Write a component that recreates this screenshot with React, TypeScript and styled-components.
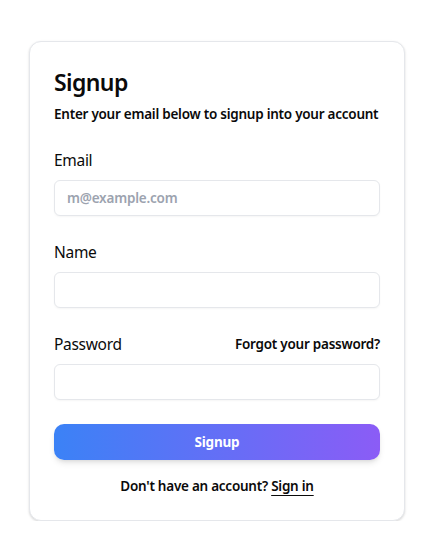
import React from "react";
import styled, { createGlobalStyle } from "styled-components";

const Global = createGlobalStyle`
  * { box-sizing: border-box; }
  body {
    margin: 0;
    background: #ffffff;
    font-family: "Noto Sans", "Open Sans", sans-serif;
    color: #0a0a0a;
  }
`;

const Page = styled.div`
  padding: 41px 0 0 29px;
`;

const Card = styled.div`
  width: 376px;
  border: 1px solid #e5e7eb;
  border-radius: 12px;
  background: #fff;
  box-shadow: 0 1px 3px rgba(0, 0, 0, 0.1), 0 1px 2px rgba(0, 0, 0, 0.06);
  padding: 24px;
  display: flex;
  flex-direction: column;
`;

const Title = styled.h1`
  margin: 0;
  font-size: 23px;
  line-height: 32px;
  font-weight: 600;
  letter-spacing: -0.6px;
`;

const Subtitle = styled.p`
  margin: 6px 0 0;
  font-size: 13.5px;
  line-height: 20px;
  font-weight: 600;
  letter-spacing: -0.25px;
  white-space: nowrap;
`;

const Form = styled.form`
  margin-top: 24px;
  display: flex;
  flex-direction: column;
  gap: 24px;
`;

const Field = styled.div`
  display: flex;
  flex-direction: column;
  gap: 8px;
`;

const LabelRow = styled.div`
  display: flex;
  align-items: center;
  justify-content: space-between;
`;

const Label = styled.label`
  font-size: 15.5px;
  line-height: 24px;
  font-weight: 400;
  letter-spacing: -0.3px;
`;

const SmallLink = styled.a`
  font-size: 13.5px;
  line-height: 20px;
  font-weight: 600;
  letter-spacing: -0.25px;
  color: #0a0a0a;
  text-decoration: none;
`;

const Input = styled.input`
  height: 36px;
  width: 100%;
  border: 1px solid #e5e7eb;
  border-radius: 6px;
  padding: 0 12px;
  font-family: inherit;
  font-size: 13.5px;
  font-weight: 600;
  letter-spacing: -0.2px;
  color: #0a0a0a;
  background: #fff;
  box-shadow: 0 1px 2px rgba(0, 0, 0, 0.04);
  outline: none;
  &::placeholder {
    color: #9ca3af;
  }
`;

const Button = styled.button`
  height: 36px;
  width: 100%;
  border: none;
  border-radius: 10px;
  background: linear-gradient(to right, #3b82f6, #8b5cf6);
  color: #fff;
  font-family: inherit;
  font-size: 13.5px;
  font-weight: 700;
  letter-spacing: -0.2px;
  box-shadow: 0 4px 6px -1px rgba(0, 0, 0, 0.1), 0 2px 4px -2px rgba(0, 0, 0, 0.1);
  cursor: pointer;
`;

const Footer = styled.p`
  margin: 16px 0 0;
  text-align: center;
  font-size: 13.5px;
  line-height: 20px;
  font-weight: 600;
  letter-spacing: -0.25px;
`;

const FooterLink = styled.a`
  color: #0a0a0a;
  text-decoration: underline;
  text-underline-offset: 4px;
`;

export default function App() {
  return (
    <Page>
      <Global />
      <Card>
        <Title>Signup</Title>
        <Subtitle>Enter your email below to signup into your account</Subtitle>
        <Form onSubmit={(e) => e.preventDefault()}>
          <Field>
            <Label htmlFor="email">Email</Label>
            <Input id="email" type="email" placeholder="m@example.com" />
          </Field>
          <Field>
            <Label htmlFor="name">Name</Label>
            <Input id="name" type="text" />
          </Field>
          <Field>
            <LabelRow>
              <Label htmlFor="password">Password</Label>
              <SmallLink href="#">Forgot your password?</SmallLink>
            </LabelRow>
            <Input id="password" type="password" />
          </Field>
          <Button type="submit">Signup</Button>
        </Form>
        <Footer>
          Don't have an account? <FooterLink href="#">Sign in</FooterLink>
        </Footer>
      </Card>
    </Page>
  );
}
